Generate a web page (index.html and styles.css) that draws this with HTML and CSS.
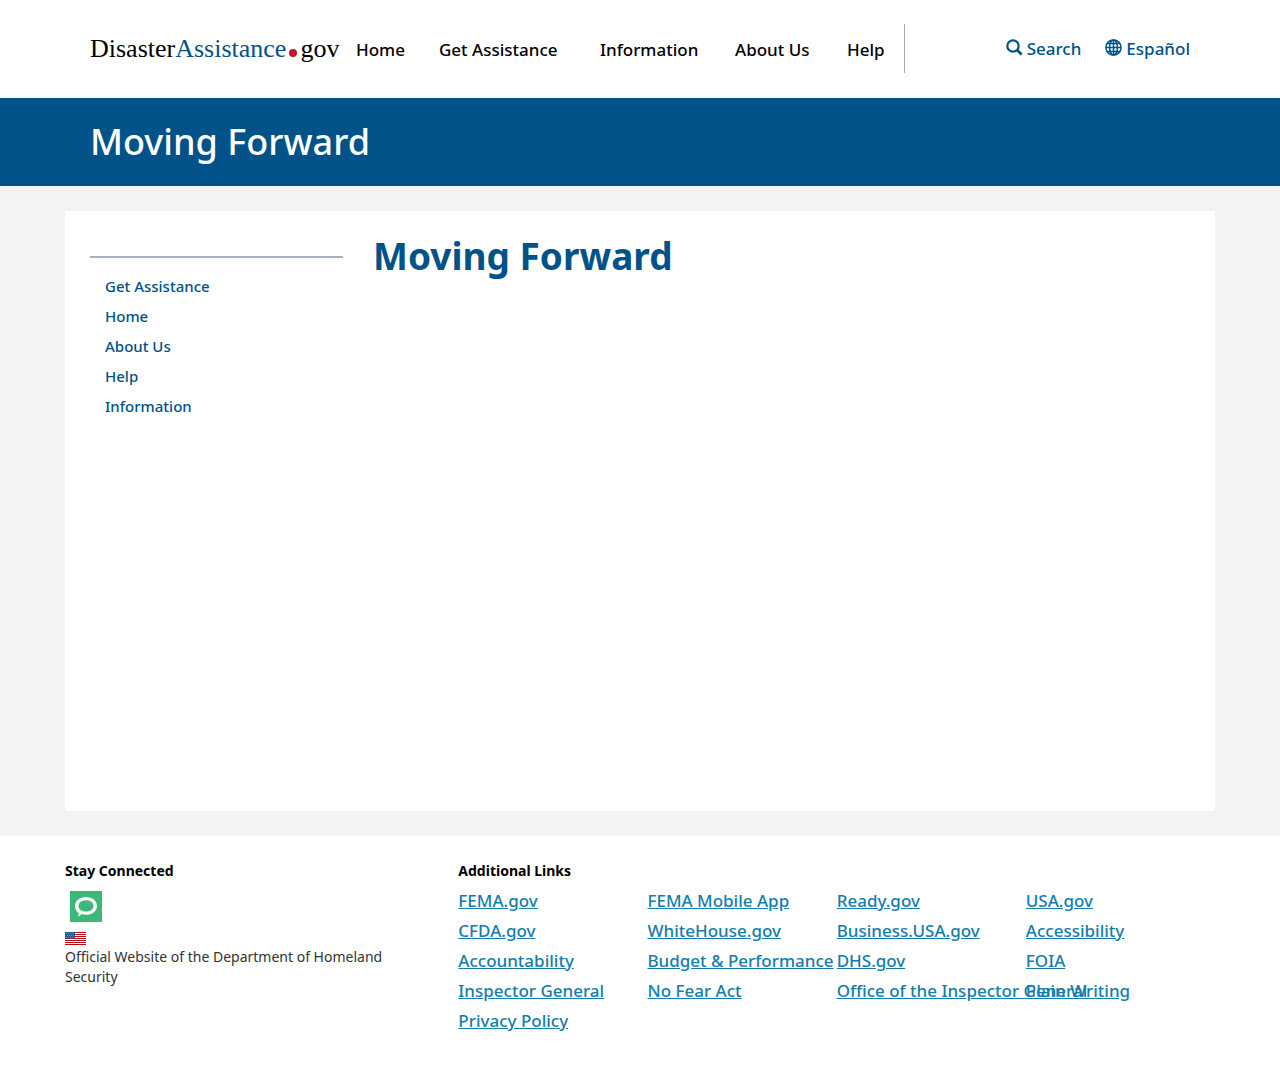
FILE: index.html
```html
<!DOCTYPE html>
<html lang="en">
<head>
<meta charset="utf-8">
<meta name="viewport" content="width=device-width, initial-scale=1">
<title>Moving Forward | DisasterAssistance.gov</title>
<link rel="stylesheet" href="styles.css">
</head>
<body>
<header class="site-header">
  <div class="container header-inner">
    <a class="logo" href="#">Disaster<span class="logo-accent">Assistance</span><span class="logo-dot"></span>gov</a>
    <nav class="main-nav" aria-label="Main">
      <a href="#">Home</a>
      <a href="#">Get Assistance</a>
      <a href="#">Information</a>
      <a href="#">About Us</a>
      <a href="#">Help</a>
    </nav>
    <div class="tools">
      <a class="tool" href="#"><svg class="icon" viewBox="0 0 17 17" aria-hidden="true"><circle cx="7" cy="7" r="5.7" fill="none" stroke="currentColor" stroke-width="2.2"/><path d="M11 11l4.6 4.6" stroke="currentColor" stroke-width="2.8"/></svg>Search</a>
      <a class="tool" href="#"><svg class="icon" viewBox="0 0 17 17" aria-hidden="true"><g fill="none" stroke="currentColor" stroke-width="1.5"><circle cx="8.5" cy="8.5" r="7.6"/><ellipse cx="8.5" cy="8.5" rx="3.9" ry="7.6"/><path d="M8.500 1v15M1 8.500h15M2.300 4.500h12.400M2.300 12.500h12.400"/></g></svg>Español</a>
    </div>
  </div>
</header>
<div class="banner">
  <p class="container banner-title">Moving Forward</p>
</div>
<main class="page">
  <div class="container panel">
    <aside class="sidebar">
      <ul class="side-nav">
        <li><a href="#">Get Assistance</a></li>
        <li><a href="#">Home</a></li>
        <li><a href="#">About Us</a></li>
        <li><a href="#">Help</a></li>
        <li><a href="#">Information</a></li>
      </ul>
    </aside>
    <h1 class="page-title">Moving Forward</h1>
  </div>
</main>
<footer class="site-footer">
  <div class="footer-inner">
    <section class="footer-col">
      <h2 class="footer-title">Stay Connected</h2>
      <a class="social" href="#" aria-label="GovDelivery"><svg class="social-icon" viewBox="0 0 32 31"><path fill="#3cb878" d="M0 0h32v31H0z"/><path fill="#fff" fill-rule="evenodd" d="M16 6C9.800 6 5 9.800 5 15c0 3 1.300 5.300 3.600 7L8.300 26l3.400-2.900c1.300.5 2.800.7 4.300.7 6.200 0 11-3.600 11-8.800S22.200 6 16 6zm0 3.200c4.300 0 7.500 2.400 7.500 5.700s-3.200 5.700-7.500 5.700-7.500-2.400-7.500-5.700S11.700 9.200 16 9.200z"/></svg></a>
      <svg class="flag" viewBox="0 0 21 13" aria-hidden="true"><path fill="#fff" d="M0 0h21v13H0z"/><path stroke="#b80d16" d="M0 .5h21M0 2.500h21M0 4.500h21M0 6.500h21M0 8.500h21M0 10.500h21M0 12.500h21"/><path fill="#245a94" d="M0 0h10v6.500H0z"/><path stroke="#6096bd" stroke-dasharray="1 1" d="M1 1.500h8M2 3.500h7M1 5.500h8"/></svg>
      <p class="footer-note">Official Website of the Department of Homeland Security</p>
    </section>
    <section class="footer-col">
      <h2 class="footer-title">Additional Links</h2>
      <ul class="link-grid">
        <li><a href="#">FEMA.gov</a></li>
        <li><a href="#">FEMA Mobile App</a></li>
        <li><a href="#">Ready.gov</a></li>
        <li><a href="#">USA.gov</a></li>
        <li><a href="#">CFDA.gov</a></li>
        <li><a href="#">WhiteHouse.gov</a></li>
        <li><a href="#">Business.USA.gov</a></li>
        <li><a href="#">Accessibility</a></li>
        <li><a href="#">Accountability</a></li>
        <li><a href="#">Budget &amp; Performance</a></li>
        <li><a href="#">DHS.gov</a></li>
        <li><a href="#">FOIA</a></li>
        <li><a href="#">Inspector General</a></li>
        <li><a href="#">No Fear Act</a></li>
        <li><a href="#">Office of the Inspector General</a></li>
        <li><a href="#">Plain Writing</a></li>
        <li><a href="#">Privacy Policy</a></li>
      </ul>
    </section>
  </div>
</footer>
</body>
</html>
```
FILE: styles.css
```css
* { box-sizing: border-box; }

body {
  margin: 0;
  background: #fff;
  color: #000;
  font-family: "Noto Sans", "Open Sans", sans-serif;
  font-size: 17px;
}

a { color: inherit; text-decoration: none; }
ul { margin: 0; padding: 0; list-style: none; }
h1, h2, p { margin: 0; }

.container {
  max-width: 1150px;
  margin: 0 auto;
  padding: 0 25px;
}

.header-inner {
  display: flex;
  align-items: center;
  padding-top: 24px;
  padding-bottom: 25px;
}

.logo {
  width: 266px;
  font-family: "Liberation Serif", serif;
  font-size: 26px;
  line-height: 30px;
  white-space: nowrap;
}
.logo-accent { color: #005288; }
.logo-dot {
  display: inline-block;
  width: 8px;
  height: 8px;
  margin: 0 3px;
  border-radius: 50%;
  background: #c41230;
}

.main-nav {
  display: grid;
  grid-template-columns: 83px 161px 135px 112px 57px;
  align-items: center;
  height: 49px;
  padding-top: 2px;
  border-right: 1px solid #aaa;
  font-weight: 500;
  line-height: 24px;
  white-space: nowrap;
}

.tools {
  display: flex;
  gap: 24px;
  margin-left: auto;
  color: #005288;
  font-weight: 500;
  line-height: 24px;
}
.tool { display: flex; gap: 4px; }
.icon { width: 17px; height: 17px; margin-top: 2px; }

.banner { background: #005288; color: #fff; }
.banner-title {
  padding-top: 19px;
  padding-bottom: 19px;
  font-size: 36px;
  font-weight: 500;
  line-height: 50px;
}

.page { padding: 25px 0; background: #f3f3f3; }
.panel {
  display: grid;
  grid-template-columns: 253px 1fr;
  gap: 30px;
  min-height: 600px;
  background: #fff;
}
.side-nav {
  margin-top: 45px;
  padding: 13px 15px;
  border-top: 2px solid #a7b1bf;
  color: #005288;
  font-size: 15px;
  font-weight: 500;
  line-height: 30px;
}
.page-title {
  padding-top: 20px;
  color: #005288;
  font-size: 37px;
  line-height: 50px;
}

.footer-inner {
  display: grid;
  grid-template-columns: 1fr 2fr;
  max-width: 1180px;
  margin: 0 auto;
  padding: 25px 0 30px;
}
.footer-col { padding: 0 15px; }
.footer-title { font-size: 14px; line-height: 20px; }
.social { display: block; width: 32px; margin: 10px 5px; }
.social-icon { display: block; width: 32px; height: 31px; }
.flag { display: block; width: 21px; height: 13px; }
.footer-note {
  margin-top: 2px;
  color: #333;
  font-size: 14px;
  line-height: 20px;
}
.link-grid {
  display: grid;
  grid-template-columns: repeat(4, minmax(0, 1fr));
  margin-top: 5px;
  color: #147dac;
  font-weight: 500;
  line-height: 30px;
  white-space: nowrap;
}
.link-grid a { text-decoration: underline; }
```
